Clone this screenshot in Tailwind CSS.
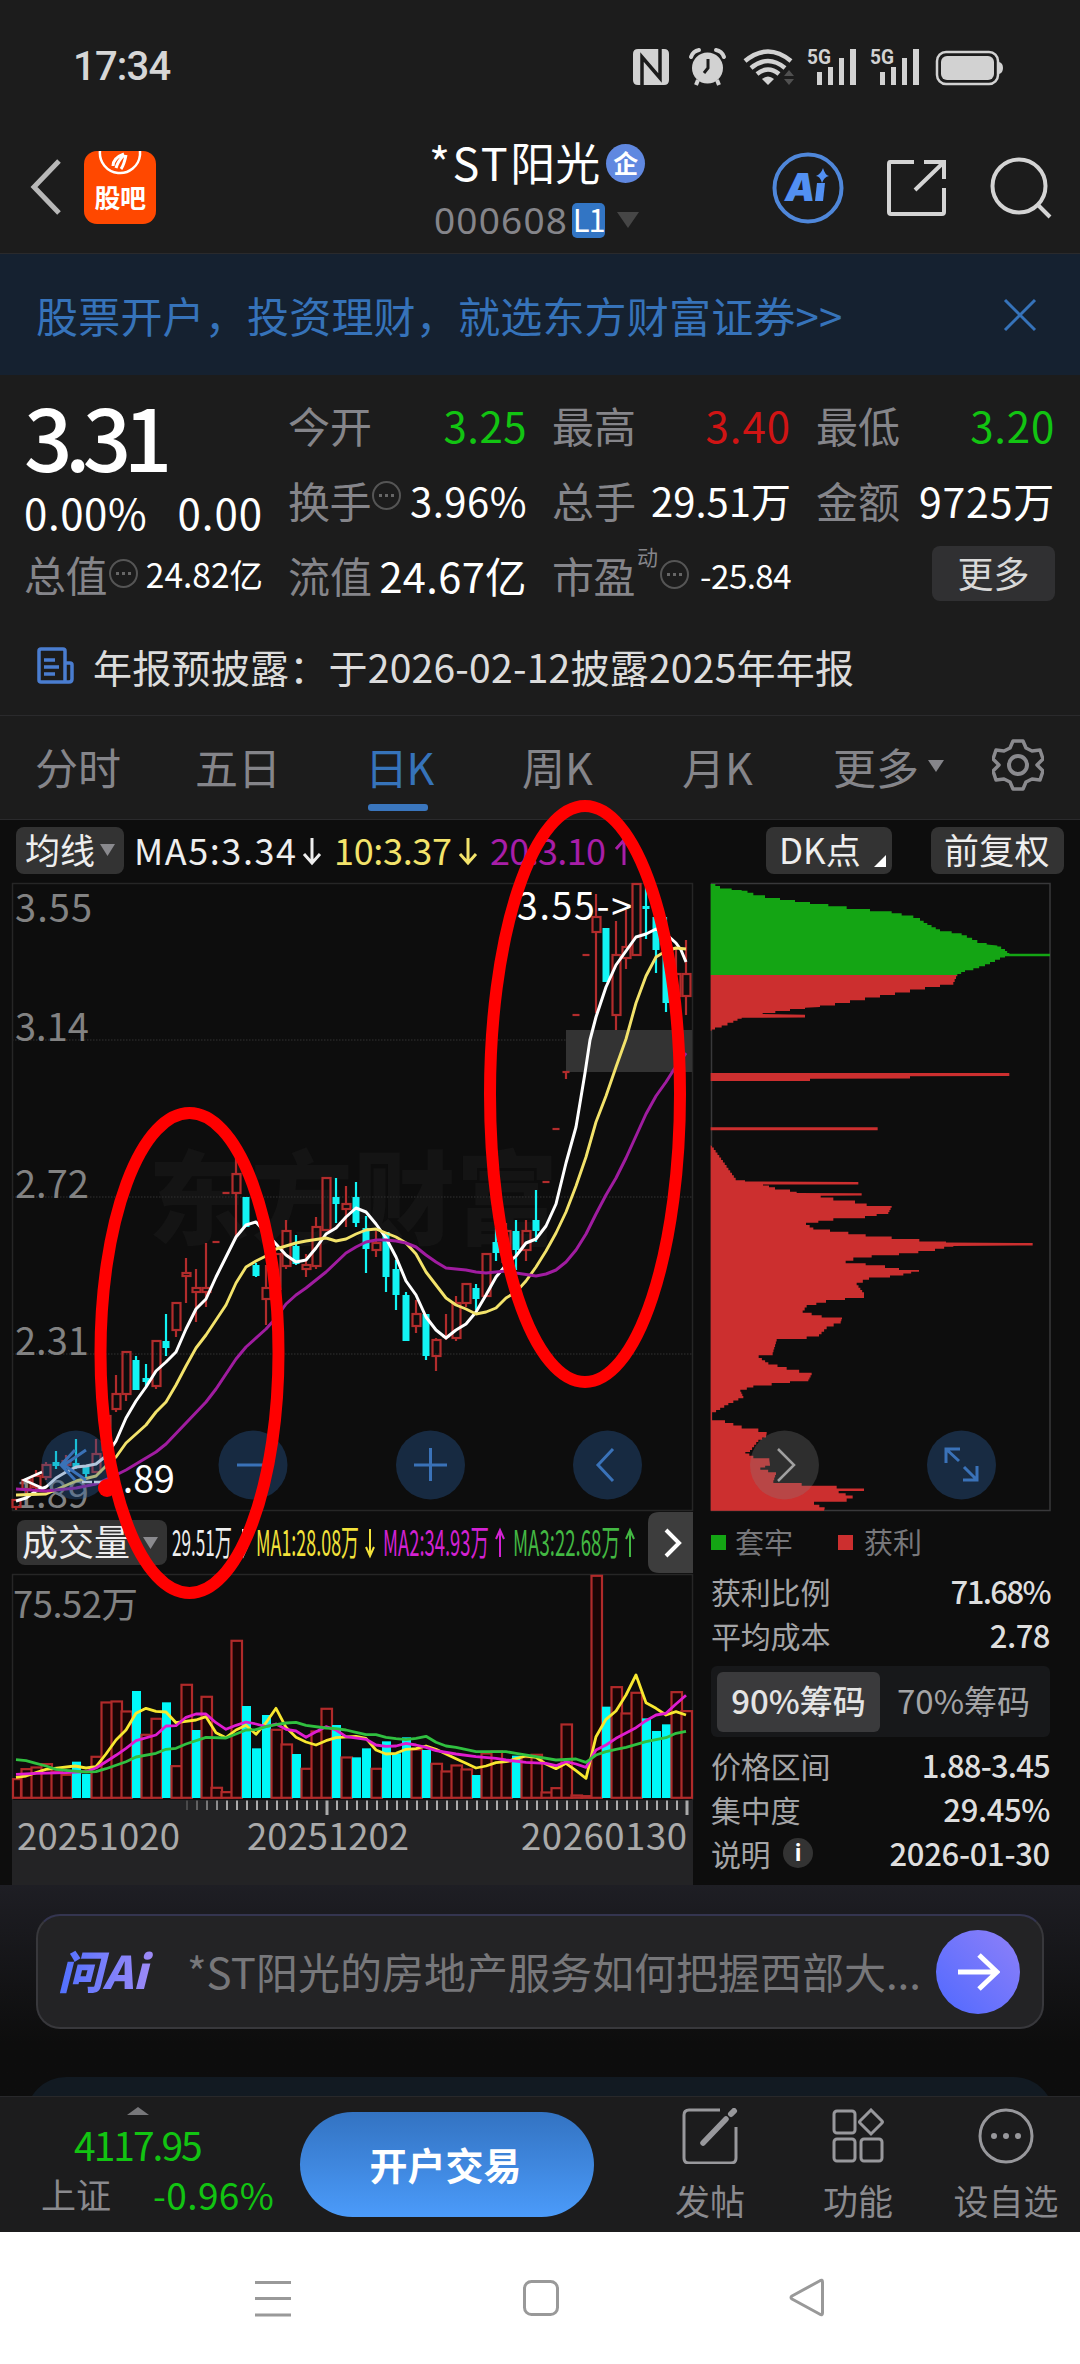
<!DOCTYPE html>
<html lang="zh-CN">
<head>
<meta charset="utf-8">
<title>*ST阳光 000608</title>
<script src="https://cdn.jsdelivr.net/npm/@tailwindcss/browser@4"></script>
</head>
<body class="relative w-[1080px] h-[2364px] overflow-hidden bg-[#0d0d0d] font-['Noto_Sans_CJK_SC',sans-serif] text-white whitespace-nowrap">

<!-- status bar -->
<header class="h-[254px] bg-[#1c1c1c] border-b border-[#2a2a2c]">
  <div class="flex h-[130px] items-start justify-between pl-[73px] pr-[70px]">
    <div class="mt-[43px] h-[48px] leading-[48px] text-[40px] font-medium tracking-[-0.8px] text-[#d6d6d6] font-['Roboto',sans-serif]">17:34</div>
    <svg class="mt-[44px]" width="380" height="44" viewBox="630 44 380 44" fill="#d2d2d2">
      <path d="M638 49h26q5 0 5 5v26q0 5-5 5h-26q-5 0-5-5V54q0-5 5-5z"/>
      <path d="M642 85V57l18 21V49" fill="none" stroke="#1c1c1c" stroke-width="3.500"/>
      <circle cx="707.500" cy="68" r="15.500"/><path d="M691 57q2-6 8-7M724 57q-2-6-8-7" stroke="#d2d2d2" stroke-width="4" fill="none" stroke-linecap="round"/><path d="M698 80l-2 5M717 80l2 5" stroke="#d2d2d2" stroke-width="4"/><path d="M708 59v9l-4 5" stroke="#1c1c1c" stroke-width="3" fill="none"/>
      <path d="M745 61q23-19 46 0M751 68q17-14 34 0M757 74q11-9 22 0" stroke="#d2d2d2" stroke-width="4.500" fill="none"/><path d="M762 79q6-5 12 0l-6 6z"/>
      <path d="M784 76l5-6 5 6zM784 79l5 6 5-6z" fill="#505050"/>
      <g id="sig"><path d="M817 72h5v13h-5zM828 67h5v18h-5zM839 58h5v27h-5zM850 49h6v36h-6z"/><text x="807" y="64" font-size="21" font-weight="700" font-family="Roboto" textLength="24" lengthAdjust="spacingAndGlyphs">5G</text></g>
      <use href="#sig" x="63"/>
      <rect x="937" y="52" width="61" height="32" rx="9" fill="none" stroke="#d2d2d2" stroke-width="2.500"/><rect x="941" y="56" width="53" height="24" rx="6"/><path d="M999 62q4 1 4 6t-4 6z"/>
    </svg>
  </div>
  <div class="flex h-[124px] items-start">
    <svg class="ml-[28px] mt-[28px]" width="36" height="58" fill="none" stroke="#b8b8b8" stroke-width="5"><path d="M31 3L6 29l25 26"/></svg>
    <div class="ml-[20px] mt-[21px] w-[72px] h-[73px] rounded-[13px] bg-[#ff4800] flex flex-col items-center overflow-hidden">
      <svg width="44" height="26" fill="none" stroke="#fff"><path d="M2 0a20 20 0 0 0 40 4V0" stroke-width="2.500"/><path d="M15 15q0-8 11-12M18 17q2-7 8-13M23 18q3-4 5-14" stroke-width="3"/></svg>
      <div class="mt-[4px] h-[32px] leading-[32px] text-[26px] font-bold tracking-[-0.5px]">股吧</div>
    </div>
    <div class="ml-[272px] w-[240px] mt-[6px]">
      <div class="flex items-center h-[52px]"><span class="ml-[1px] text-[45px] leading-[52px]"><span class="tracking-[2.5px]">*ST</span>阳光</span>
        <span class="ml-[6px] mt-[3px] flex w-[39px] h-[39px] shrink-0 items-center justify-center rounded-full bg-[#6088e0] text-[25px] leading-[34px] pb-[3px] font-bold">企</span></div>
      <div class="flex items-center h-[56px] mt-[4px] ml-[6px]"><span class="text-[37px] tracking-[1.2px] text-[#85858a] leading-[50px] font-['Noto_Sans',sans-serif]">000608</span>
        <span class="ml-[4px] flex w-[33px] h-[35px] items-center justify-center rounded-[5px] bg-[#3275c4] text-[31px] leading-[30px] pb-[3px] tracking-[-1px]">L1</span>
        <svg class="ml-[12px]" width="22" height="16" fill="#464646"><path d="M0 0h22L11 16z"/></svg></div>
    </div>
    <svg class="ml-[104px] mt-[22px]" width="72" height="72" viewBox="0 0 72 72"><circle cx="36" cy="36" r="33.500" fill="none" stroke="#4f87da" stroke-width="4"/><text x="13" y="49" font-family="Inter" font-weight="900" font-style="italic" font-size="38" fill="#5290f2" textLength="28">A</text><path d="M45 31h8l-2 18h-8z" fill="#5290f2"/><path d="M51 16q2 7 6 8-5 1-7 7-2-7-6-7 5-2 7-8z" fill="#5290f2"/></svg>
    <svg class="ml-[43px] mt-[27px]" width="60" height="62" fill="none" stroke="#d4d4d4" stroke-width="4"><path d="M27 5H3q-1 0-1 2v48q0 2 2 2h51q2 0 2-2V31M37 5h20v17M57 5L28 33"/></svg>
    <svg class="ml-[42px] mt-[26px]" width="64" height="64" fill="none" stroke="#d4d4d4" stroke-width="4"><circle cx="30" cy="30" r="26.500"/><path d="M48 48l13 13"/></svg>
  </div>
</header>

<!-- promo banner -->
<div class="flex h-[121px] items-center justify-between bg-[#152130] pl-[36px] pr-[43px] text-[#3673ba]">
  <span class="text-[42px] leading-[60px] tracking-[0.2px]">股票开户，投资理财，就选东方财富证券&gt;&gt;</span>
  <svg width="34" height="34" stroke="#3673ba" stroke-width="3"><path d="M2 2l30 30M32 2L2 32"/></svg>
</div>

<!-- quote -->
<section class="h-[341px] bg-[#1c1c1c] border-b border-[#2a2a2c] pt-[14px]">
  <div class="flex gap-[25px] pl-[24px] text-[42px] leading-[50px]">
    <div class="w-[239px]">
      <div class="h-[95px] leading-[92px] text-[85px] font-medium tracking-[-7.5px]">3.31</div>
      <div class="flex h-[56px] items-center justify-between pb-[1px] text-[42px]"><span class="tracking-[0.6px]">0.00%</span><span class="tracking-[1px]">0.00</span></div>
      <div class="flex h-[67px] items-center text-[#85858a]"><span class="tracking-[-0.5px]">总值</span><svg class="ml-[1px]" width="31" height="31" viewBox="0 0 31 31"><circle cx="15.500" cy="15.500" r="13.500" fill="none" stroke="#555" stroke-width="2"/><path d="M8 14h3v3H8zM14 14h3v3h-3zM20 14h3v3h-3z" fill="#666"/></svg><span class="ml-auto text-[33.500px] text-white">24.82亿</span></div>
    </div>
    <div class="grid grid-cols-[239px_239px_239px] auto-rows-[75px] gap-x-[25px] items-center -mt-[2px] [&>div]:flex [&>div]:items-center [&>div]:justify-between">
      <div><span class="text-[#85858a]">今开</span><span class="text-[#12c412] tracking-[0.5px]">3.25</span></div>
      <div><span class="text-[#85858a]">最高</span><span class="text-[#d01414] tracking-[1px]">3.40</span></div>
      <div><span class="text-[#85858a]">最低</span><span class="text-[#12c412] tracking-[0.8px]">3.20</span></div>
      <div><span class="text-[#85858a] tracking-[-0.5px]">换手</span><svg class="mb-[8px]" width="31" height="31" viewBox="0 0 31 31"><circle cx="15.500" cy="15.500" r="13.500" fill="none" stroke="#555" stroke-width="2"/><path d="M8 14h3v3H8zM14 14h3v3h-3zM20 14h3v3h-3z" fill="#666"/></svg><span class="ml-auto text-[40px] tracking-[0.5px]">3.96%</span></div>
      <div><span class="text-[#85858a]">总手</span><span class="text-[40px]">29.51万</span></div>
      <div><span class="text-[#85858a]">金额</span><span class="text-[41px] tracking-[0.8px]">9725万</span></div>
      <div><span class="text-[#85858a]">流值</span><span class="text-[41.500px] tracking-[0.4px]">24.67亿</span></div>
      <div><span class="text-[#85858a] tracking-[-0.5px]">市盈</span><span class="ml-[2px] mb-[38px] text-[21px] leading-[24px] text-[#85858a]">动</span><svg class="ml-[1px]" width="31" height="31" viewBox="0 0 31 31"><circle cx="15.500" cy="15.500" r="13.500" fill="none" stroke="#555" stroke-width="2"/><path d="M8 14h3v3H8zM14 14h3v3h-3zM20 14h3v3h-3z" fill="#666"/></svg><span class="ml-auto text-[33px] tracking-[-0.5px]">-25.84</span></div>
      <div><span class="ml-auto mb-[3px] flex w-[123px] h-[55px] items-center justify-center rounded-[8px] bg-[#303032] text-[36px] leading-[46px] pb-[2px] text-[#d8d8d8]">更多</span></div>
    </div>
  </div>
  <div class="mt-[22px] flex h-[66px] items-center pl-[37px]">
    <svg class="mb-[3px]" width="38" height="38" fill="none" stroke="#4a7dd0" stroke-width="3.500"><path d="M28 35V4q0-2-2-2H4Q2 2 2 4v29q0 2 2 2h28q3 0 3-3V18q0-2-2-2h-5M7 13h11M7 20h15M7 27h11"/></svg>
    <span class="ml-[18px] mb-[3px] text-[39px] leading-[50px] tracking-[0.25px] text-[#dcdcdc]">年报预披露：于2026-02-12披露2025年年报</span>
  </div>
</section>

<!-- period tabs -->
<nav class="flex h-[104px] items-start bg-[#1c1c1c] border-b border-[#2a2a2c] pt-[20px] text-[43px] leading-[60px] text-[#85858a]">
  <span class="ml-[35px] w-[160px]">分时</span><span class="w-[170px]">五日</span>
  <span class="w-[157px] text-[#3673ba]"><span class="block tracking-[-1.5px]">日K</span><span class="mt-[8px] ml-[3px] block h-[7px] w-[60px] rounded-[3px] bg-[#3a76be]"></span></span>
  <span class="w-[160px]">周K</span><span class="w-[151px]">月K</span><span>更多</span>
  <svg class="ml-[9px] mt-[24px]" width="16" height="12" fill="#85858a"><path d="M0 0h16L8 12z"/></svg>
  <svg class="ml-[48px] mt-[2px]" width="52" height="54" viewBox="-26 -27 52 54" fill="none" stroke="#8a8a8e" stroke-width="4"><path d="M-5-24H5L8-17 14-14 22-15 25-6 19 0 25 6 22 15 14 14 8 17 5 24H-5L-8 17-14 14-22 15-25 6-19 0-25-6-22-15-14-14-8-17z" stroke-linejoin="round" stroke-width="3.500"/><circle r="9"/></svg>
</nav>

<!-- indicator row -->
<div class="flex h-[62px] pt-[7px] pl-[16px] text-[35px] leading-[43px]">
  <div class="flex w-[108px] h-[47px] rounded-[8px] bg-[#333] pl-[9px] text-[#eee]"><span>均线</span><svg class="ml-[5px] mt-[17px]" width="15" height="12" fill="#8a8a8e"><path d="M0 0h15L7.500 12z"/></svg></div>
  <svg class="overflow-visible" width="510" height="50" viewBox="124 827 510 50" font-size="36"><text x="134" y="865" fill="#eee" textLength="162">MA5:3.34</text><path d="M312 838v25m-8-9l8 9 8-9" fill="none" stroke="#eee" stroke-width="3"/><text x="334" y="865" fill="#f3e36b" textLength="118">10:3.37</text><path d="M468 838v25m-8-9l8 9 8-9" fill="none" stroke="#f3e36b" stroke-width="3"/><text x="490" y="865" fill="#a81ea8" textLength="116">20:3.10</text><path d="M624 865v-25m-8 9l8-9 8 9" fill="none" stroke="#a81ea8" stroke-width="3"/></svg>
  <div class="ml-[132px] relative w-[126px] h-[47px] rounded-[8px] bg-[#333] pl-[13px] text-[#eee]">DK点<svg class="absolute right-[6px] bottom-[7px]" width="12" height="12" fill="#fff"><path d="M12 0v12H0z"/></svg></div>
  <div class="ml-[39px] w-[133px] h-[47px] rounded-[8px] bg-[#333] pl-[13px] text-[#eee] tracking-[0.3px]">前复权</div>
</div>

<!-- charts -->
<main class="flex h-[1003px]">
  <svg id="k" class="shrink-0" width="700" height="1003" viewBox="0 882 700 1003"></svg>
  <section class="w-[380px]">
    <svg id="chips" class="block" width="380" height="633" viewBox="700 882 380 633"></svg>
    <div class="ml-[11px] w-[339px] text-[30px] text-[#a4a4a6]">
      <div class="flex h-[54px] items-center pb-[2px] text-[29px] leading-[40px] text-[#77777a]"><i class="mt-[2px] block w-[15px] h-[15px] bg-[#14a514]"></i><span class="ml-[9px] mb-[1px]">套牢</span><i class="ml-[45px] mt-[2px] block w-[15px] h-[15px] bg-[#cc2f2f]"></i><span class="ml-[11px] mb-[1px]">获利</span></div>
      <div class="flex h-[44px] items-center justify-between leading-[40px]"><span class="tracking-[-0.200px]">获利比例</span><b class="text-[31px] font-medium tracking-[-1.600px] text-[#dedede]">71.68%</b></div>
      <div class="flex h-[44px] items-center justify-between leading-[40px]"><span class="tracking-[-0.200px]">平均成本</span><b class="text-[31px] font-medium tracking-[-0.500px] text-[#dedede]">2.78</b></div>
      <div class="mt-[9px] flex h-[71px] items-center rounded-[6px] bg-[#17181a] pl-[6px] text-[33px] leading-[40px]"><span class="flex w-[163px] h-[60px] items-center justify-center rounded-[6px] bg-[#3a3a3c] pb-[3px] font-medium text-[#e4e4e4]">90%筹码</span><span class="ml-[17px] pb-[3px]">70%筹码</span></div>
      <div class="mt-[6px] flex h-[44px] items-center justify-between leading-[40px]"><span class="tracking-[-0.200px]">价格区间</span><b class="text-[31px] font-medium tracking-[-0.800px] text-[#dedede]">1.88-3.45</b></div>
      <div class="flex h-[44px] items-center justify-between leading-[40px]"><span class="tracking-[-0.200px]">集中度</span><b class="text-[31px] font-medium tracking-[-0.400px] text-[#dedede]">29.45%</b></div>
      <div class="flex h-[44px] items-center leading-[40px]"><span class="tracking-[-0.500px]">说明</span><span class="ml-[13px] flex w-[30px] h-[30px] items-center justify-center rounded-full bg-[#333] font-['Inter'] text-[23px] leading-[30px] font-bold text-white">i</span><b class="ml-auto text-[31px] font-medium tracking-[-0.300px] text-[#dedede]">2026-01-30</b></div>
    </div>
  </section>
</main>

<!-- assistant prompt -->
<section class="h-[211px] overflow-hidden bg-linear-to-b from-[#1e1e24] to-[#0d0d0d] to-75% pt-[29px]">
  <div class="mx-[36px] flex h-[115px] items-center rounded-[24px] border-2 border-[#38383c] border-t-[#343550] bg-[#232325]">
    <span class="ml-[20px] w-[104px] pb-[4px] text-[45px] leading-[56px] font-black italic bg-linear-to-r from-[#4f70ff] to-[#a58cf5] bg-clip-text text-transparent">问Ai</span>
    <span class="ml-[25px] mb-[1px] w-[733px] text-[42px] leading-[56px] text-[#77777a]">*ST阳光的房地产服务如何把握西部大...</span>
    <span class="ml-[16px] flex w-[84px] h-[84px] shrink-0 items-center justify-center rounded-full bg-linear-to-tr from-[#4f68ff] to-[#8e80f8]"><svg width="44" height="40" fill="none" stroke="#fff" stroke-width="5"><path d="M2 20h38M23 3l18 17-18 17"/></svg></span>
  </div>
  <div class="mx-[26px] mt-[48px] h-[80px] rounded-t-[40px] bg-[#121a22]"></div>
</section>

<!-- action bar -->
<footer class="flex h-[136px] items-start bg-[#1c1c1d] border-t border-[#28282a] text-[35px] leading-[44px] text-[#8a8a8e]">
  <div class="w-[300px]">
    <svg class="ml-[127px] mt-[10px] block" width="22" height="8" fill="#77777a"><path d="M0 8L11 0l11 8z"/></svg>
    <div class="mt-[7px] ml-[74px] h-[44px] text-[39px] tracking-[-2px] text-[#12c412]">4117.95</div>
    <div class="mt-[6px] ml-[41px] flex"><span>上证</span><span class="ml-[42px] text-[37px] tracking-[0.400px] text-[#12c412]">-0.96%</span></div>
  </div>
  <div class="mt-[15px] flex w-[294px] h-[105px] items-center justify-center rounded-full bg-linear-to-b from-[#3373c2] to-[#4b9bfa] pb-[1px] pr-[3px] text-[38px] font-bold text-white">开户交易</div>
  <div class="ml-[74px] mt-[11px] flex w-[84px] flex-col items-center gap-[14px]"><svg width="58" height="56" fill="none" stroke="#98989c" stroke-width="3"><path d="M39 2H8Q3 2 3 7v43q0 5 5 5h42q5 0 5-5V19"/><path d="M45 11L22 35" stroke-width="5.500" stroke-linecap="round"/><path d="M50 6l3-3" stroke-width="6" stroke-linecap="round"/></svg><span>发帖</span></div>
  <div class="ml-[64px] mt-[11px] flex w-[84px] flex-col items-center gap-[14px]"><svg width="54" height="56" fill="none" stroke="#98989c" stroke-width="3"><rect x="3" y="3" width="21" height="22" rx="3"/><rect x="3" y="31" width="21" height="22" rx="3"/><rect x="30" y="31" width="21" height="22" rx="3"/><path d="M40 2l11 11q1 1 0 2L40 26 29 15q-1-1 0-2z"/></svg><span>功能</span></div>
  <div class="ml-[50px] mt-[11px] flex w-[112px] flex-col items-center gap-[14px]"><svg width="58" height="56" fill="none" stroke="#98989c" stroke-width="3"><circle cx="29" cy="28" r="26"/><path d="M17 28h0M29 28h0M41 28h0" stroke-width="6" stroke-linecap="round"/></svg><span>设自选</span></div>
</footer>

<!-- system navigation -->
<div class="flex h-[132px] bg-white pt-[46px]">
  <svg class="ml-[253px]" width="40" height="40" stroke="#999" stroke-width="3"><path d="M2 4.500h36M2 20.500h36M2 37h36"/></svg>
  <svg class="ml-[228px]" width="40" height="40" fill="none" stroke="#999" stroke-width="3"><rect x="3.500" y="3.500" width="33" height="33" rx="7"/></svg>
  <svg class="ml-[227px]" width="40" height="40" fill="none" stroke="#999" stroke-width="3" stroke-linejoin="round"><path d="M34.500 4v31q0 3-3 1L4 21q-2-1.500 0-3L31.500 3q3-2 3 1z"/></svg>
</div>

<!-- hand-drawn markers -->
<svg class="absolute left-0 top-[780px] pointer-events-none" width="700" height="840" viewBox="0 780 700 840" fill="none" stroke="#f00" stroke-width="12">
  <ellipse cx="189.500" cy="1353" rx="89" ry="240"/><ellipse cx="585" cy="1094" rx="95" ry="288"/><circle cx="107" cy="1488" r="9" fill="#f00" stroke="none"/>
</svg>

<script>
const R='#b22c2c', C='#12f4f4';
// [rising, body top, body bottom, wick top, wick bottom]
const candles=[[1,1500,1507,1500,1510],[1,1480,1489,1478,1493],[1,1476,1487,1470,1490],[1,1465,1477,1462,1480],[0,1462,1466,1451,1469],[1,1461,1465,1455,1467],[0,1463,1467,1439,1469],[0,1467,1474,1466,1478],[1,1454,1472,1439,1472],[1,1416,1450,1416,1450],[1,1394,1409,1375,1412],[1,1352,1394,1352,1401],[0,1360,1390,1356,1390],[0,1378,1382,1364,1387],[1,1341,1386,1341,1389],[0,1341,1348,1314,1356],[1,1303,1330,1303,1337],[1,1273,1276,1258,1303],[1,1288,1292,1269,1322],[1,1288,1292,1243,1307],[1,1242,1242,1242,1242],[1,1193,1193,1193,1193],[1,1174,1193,1158,1237],[0,1197,1227,1197,1227],[0,1265,1276,1263,1277],[1,1288,1299,1265,1325],[1,1254,1289,1254,1289],[1,1231,1266,1220,1269],[0,1246,1264,1235,1265],[1,1265,1269,1254,1277],[1,1227,1266,1217,1269],[1,1178,1230,1178,1230],[0,1197,1204,1178,1223],[1,1204,1209,1186,1227],[0,1197,1223,1182,1227],[0,1228,1249,1216,1273],[1,1243,1250,1231,1257],[0,1232,1277,1232,1292],[0,1269,1295,1260,1310],[0,1295,1341,1292,1341],[1,1314,1326,1300,1333],[0,1314,1356,1314,1360],[1,1340,1356,1338,1371],[1,1337,1337,1314,1340],[1,1303,1338,1296,1341],[1,1284,1303,1284,1307],[0,1288,1299,1284,1310],[1,1254,1296,1254,1296],[0,1242,1253,1227,1261],[1,1231,1262,1223,1262],[0,1231,1250,1220,1270],[1,1231,1250,1220,1261],[0,1220,1231,1190,1242],[1,1182,1182,1182,1182],[1,1129,1129,1129,1129],[1,1072,1072,1072,1079],[1,1015,1015,1015,1015],[1,955,955,955,955],[1,917,932,894,1013],[0,928,982,928,982],[1,955,1015,921,1030],[1,947,958,910,969],[1,884,955,884,955],[0,906,909,887,939],[0,917,950,917,973],[0,940,1003,917,1012],[1,974,996,947,998],[1,974,996,940,1015]];
// negative = falling day
const vol=[835,805,800,790,812,822,-785,-822,768,605,602,632,-573,702,654,-607,796,552,-690,588,861,874,420,-618,-745,-645,687,731,-762,804,692,624,-675,770,-772,-745,804,-724,-760,-712,746,-750,789,812,794,806,-825,758,752,783,-767,769,762,875,862,671,884,886,225,-620,559,638,576,-655,-693,-673,574,631];
let s='';
const line=(p,c,w)=>`<polyline points="${p}" fill="none" stroke="${c}" stroke-width="${w}" stroke-linejoin="round"/>`;
s+=`<text x="148" y="1237" font-size="102" font-weight="900" fill="#141414" textLength="410">东方财富</text>`;
s+=`<path d="M12 883.500H692.500V1510.500H12.500V883M12 1574.500H692.500V1800M12.500 1574V1800" fill="none" stroke="#262626" stroke-width="1.500"/>`;
s+=`<path d="M12 1040H692M12 1197H692M12 1354H692" stroke="#262626" stroke-width="1.500" stroke-dasharray="1.500 1.500"/>`;
s+=`<rect x="566" y="1030" width="126" height="42" fill="#333"/>`;
s+=`<g font-size="38" fill="#828282"><text x="15" y="922" textLength="77">3.55</text><text x="15" y="1041">3.14</text><text x="15" y="1198">2.72</text><text x="15" y="1355">2.31</text><text x="15" y="1508">1.89</text><text x="13" y="1618" font-size="36.500" textLength="125">75.52万</text></g>`;
candles.forEach((c,i)=>{const x=16+10*i,[d,t,b,wt,wb]=c;
  if(d){ if(wt<t)s+=`<path d="M${x} ${wt}V${t}" stroke="${R}" stroke-width="2.2"/>`; if(wb>b)s+=`<path d="M${x} ${b}V${wb}" stroke="${R}" stroke-width="2.2"/>`;
    s+= b-t<2?`<path d="M${x-3.5} ${t}h7" stroke="${R}" stroke-width="2.2"/>`:`<rect x="${x-3.5}" y="${t}" width="8" height="${b-t}" fill="none" stroke="${R}" stroke-width="2.2"/>`;}
  else s+=`<path d="M${x} ${wt}V${wb}" stroke="${C}" stroke-width="2.2"/><rect x="${x-3.5}" y="${t}" width="7" height="${b-t}" fill="${C}"/>`;});
s+=line('16,1501 26,1498 36,1491 46,1487 56,1478 66,1472 76,1467 86,1466 96,1464 106,1456 116,1441 126,1418 136,1401 146,1387 156,1371 166,1362 176,1352 186,1329 196,1309 206,1299 216,1277 226,1257 236,1237 246,1225 256,1222 266,1233 276,1244 286,1255 296,1262 306,1260 316,1248 326,1234 336,1228 346,1217 356,1208 366,1212 376,1224 386,1238 396,1257 406,1281 416,1295 426,1317 436,1330 446,1338 456,1330 466,1324 476,1312 486,1295 496,1277 506,1265 516,1256 526,1243 536,1239 546,1226 556,1204 566,1163 576,1127 585,1073 590,1040 596,1017 606,987 616,965 626,951 636,937 646,934 656,929 666,934 676,943 681,950 686,962','#fff',3);
s+=line('16,1495 46,1494 60,1488 76,1481 96,1476 106,1466 116,1457 126,1443 146,1425 156,1412 166,1402 176,1385 186,1366 196,1348 206,1335 216,1320 226,1305 236,1283 246,1267 256,1261 266,1256 276,1249 296,1243 306,1241 326,1238 336,1241 346,1239 356,1234 366,1230 376,1229 386,1233 396,1237 406,1243 416,1254 426,1272 436,1285 446,1298 456,1305 466,1309 476,1314 486,1312 496,1308 506,1298 516,1292 526,1281 536,1267 546,1251 556,1233 566,1212 576,1186 586,1157 596,1122 606,1096 616,1067 626,1039 636,1003 646,976 656,957 666,951 676,948 686,949','#f3e36b',2.9);
s+=line('16,1489 46,1491 76,1488 96,1484 116,1475 126,1470 146,1458 156,1452 166,1444 186,1423 206,1402 216,1389 226,1374 236,1359 246,1347 266,1329 276,1318 286,1304 296,1295 306,1288 326,1272 346,1253 356,1247 366,1242 376,1240 386,1240 396,1241 406,1243 416,1247 426,1255 436,1262 446,1268 466,1270 476,1272 486,1273 506,1271 516,1273 536,1276 546,1274 556,1270 566,1262 576,1250 586,1234 596,1214 606,1195 616,1178 626,1158 636,1136 646,1114 656,1096 666,1082 673,1071 686,1053','#a01ca0',3);
s+=`<g font-size="37.500" fill="#fff"><text x="517" y="920" textLength="115">3.55-></text><text x="102" y="1493">1.89</text></g><path d="M42 1472L24 1480l18 8M82 1482h10M94 1482h10" fill="none" stroke="#fff" stroke-width="2.500"/>`;
[76,253,430.5,607.5].forEach(x=>s+=`<circle cx="${x}" cy="1465" r="34.500" fill="#2a5f9e" fill-opacity=".36"/>`);
s+=`<path d="M86 1450l-22 15 22 15M75 1450l-14 15 14 15M237 1465h32M414 1465h33M430.500 1448v33M613 1449l-15 16 15 16" fill="none" stroke="#3a72b8" stroke-width="3"/>`;
s+=`<rect x="17" y="1520" width="150" height="45" rx="8" fill="#333"/><text x="22" y="1556" font-size="36" fill="#eee">成交量</text><path d="M143 1537h15l-7.500 12z" fill="#8a8a8e"/>`;
[[172,60,'29.51万','#eee',243,0],[256,103,'MA1:28.08万','#f3e23b',370,0],[383,106,'MA2:34.93万','#d322d3',500,1],[513,107,'MA3:22.68万','#43b843',630,1]].forEach(([x,w,t,c,a,u])=>s+=`<text x="${x}" y="1556" font-size="36" fill="${c}" textLength="${w}" lengthAdjust="spacingAndGlyphs">${t}</text><path d="${u?`M${a} 1557v-27m-4 9l4-9 4 9`:`M${a} 1529v27m-4-9l4 9 4-9`}" fill="none" stroke="${c}" stroke-width="2"/>`);
s+=`<path d="M693 1512h-34q-11 0-11 11v39q0 11 11 11h34z" fill="#3d3d3d"/><path d="M666 1530l13 13-13 13" fill="none" stroke="#fff" stroke-width="4"/>`;
vol.forEach((v,i)=>{const x=16+10*i,y=1500+Math.abs(v)/3;s+=v<0?`<rect x="${x-4}" y="${y}" width="9" height="${1798-y}" fill="#00f8f8"/>`:`<rect x="${x-(i?4.5:3)}" y="${y+.8}" width="${i?10.5:8}" height="${1797-y}" fill="#1a0505" stroke="#b02a2a" stroke-width="2.200"/>`;});
const vl=(p,c)=>line(p.trim().split(' ').map(q=>{const[a,b]=q.split(',');return a+','+(1500+b/3).toFixed(1)}).join(' '),c,2.8);
s+=vl('16,832 26,828 36,818 46,808 75,798 86,804 96,800 106,762 116,720 126,690 136,640 146,625 156,634 166,636 176,668 196,660 206,650 216,698 226,713 236,690 246,676 256,703 266,668 276,625 286,682 296,712 306,726 316,735 326,722 336,713 356,709 366,715 376,750 386,762 396,760 406,748 416,746 426,738 436,748 446,762 456,776 466,790 476,804 486,798 496,788 506,785 516,776 526,768 536,772 546,792 556,806 566,790 576,812 586,835 596,710 606,658 616,633 626,585 636,525 646,608 656,625 666,645 676,635 686,645','#f8e830');
s+=vl('16,823 36,820 66,818 86,815 96,804 106,785 116,766 126,745 136,722 156,705 166,678 176,677 186,652 196,642 206,642 216,668 226,688 236,676 246,666 256,672 266,680 276,672 286,688 296,693 306,712 316,695 326,680 336,690 346,710 366,718 376,735 386,739 396,738 406,730 416,735 426,742 436,752 456,762 476,770 496,775 506,780 526,787 546,790 556,797 566,785 576,792 586,802 596,750 606,735 616,715 636,683 646,662 656,645 666,640 676,612 686,586','#e01cd0');
s+=vl('16,779 26,782 36,790 46,798 56,808 66,811 86,816 96,815 106,806 126,785 136,771 156,760 166,748 176,745 186,732 206,712 226,714 236,702 246,690 256,689 266,680 276,674 286,669 296,667 306,676 326,684 336,686 346,690 356,697 366,704 376,704 386,712 396,716 406,719 416,715 426,709 436,727 446,738 456,742 476,755 506,755 516,760 536,770 556,780 576,777 586,787 596,765 606,755 616,748 626,742 646,725 666,713 676,700 686,694','#30c040');
s+=`<rect x="12" y="1800" width="681" height="85" fill="#232325"/>`;
for(let x=187;x<=687;x+=10){const m=x==327||x==687;s+=`<path d="M${x} 1800.500V${m?1815:1810}" stroke="#aaa" stroke-width="${m?3:2}" opacity="${Math.min(1,(x-170)/60)}"/>`;}
s+=`<g font-size="36.500" fill="#aaa"><text x="17" y="1850" textLength="163">20251020</text><text x="247" y="1850" textLength="162">20251202</text><text x="521" y="1850" textLength="166">20260130</text></g>`;
document.getElementById('k').innerHTML=s;

// chip distribution outlines in plot units
const green='62,55 90,64 125,71 155,71 190,80 225,88 270,92 315,98 360,102 415,107 470,113 540,120 605,123 635,130 670,134 690,142 712,152 750,167 785,172 815,176 862,193 890,201 922,203 945,214 958,223 1080,223 1080,229 945,229 915,240 885,250 850,260 825,264 802,273 62,273';
const red=['62,273 802,273 790,293 750,300 705,304 660,312 615,318 570,323 525,330 480,336 435,343 390,349 345,351 300,357 256,361 218,366 345,368 345,374 155,375 130,384 95,396 75,400 65,406 62,406','62,506 958,506 958,513 660,514 660,519 360,520 360,525 62,525','62,635 563,635 563,642 62,642',
'62,678 66,680 137,758 165,764 505,765 505,771 219,771 255,780 300,786 320,791 515,792 515,797 392,798 430,806 495,812 530,820 605,824 595,839 525,848 430,854 385,860 348,864 370,876 420,880 475,887 527,892 605,897 688,904 768,909 1028,910 1028,916 790,917 735,926 685,932 627,937 545,941 490,948 467,956 527,960 585,966 627,973 687,976 640,985 600,990 537,994 500,1008 522,1030 522,1039 465,1042 408,1049 350,1060 338,1074 365,1078 395,1085 456,1089 452,1098 410,1112 387,1130 350,1135 260,1141 248,1173 206,1181 235,1196 290,1208 365,1222 355,1237 300,1240 245,1246 190,1251 151,1261 160,1276 115,1293 66,1315 66,1327 105,1335 155,1347 205,1355 230,1363 228,1370 205,1380 180,1405 166,1408 178,1413 190,1418 238,1425 240,1437 211,1446 258,1458 250,1477 335,1484 440,1490 522,1497 446,1502 488,1513 470,1521 372,1529 404,1541 402,1546 62,1546'];
// outlines advance in horizontal steps, one row at a time
const steps=p=>{const a=p.split(' ');return a.map((q,i)=>{if(!i)return q;const[x0,y0]=a[i-1].split(',').map(Number),[x1,y1]=q.split(',').map(Number);const n=Math.round(Math.abs(y1-y0)/6);if(Math.abs(x1-x0)<3||n<1)return q;let o='';for(let k=1;k<=n;k++){const xp=x0+(x1-x0)*(k-1)/n,x=x0+(x1-x0)*k/n,y=y0+(y1-y0)*(k-.5)/n;o+=`${xp},${y} ${x},${y} `;}return o+q;}).join(' ');};
let h=`<rect x="711.500" y="883.500" width="338.500" height="627" fill="none" stroke="#38383a" stroke-width="1.500"/><g transform="translate(690 860) scale(.33333 .42085)"><polygon points="${steps(green)}" fill="#14a514"/>${red.map(p=>`<polygon points="${steps(p)}" fill="#cc2f2f"/>`).join('')}</g>`;
h+=`<circle cx="784.500" cy="1465" r="34.500" fill="#848484" fill-opacity=".28"/><path d="M778 1449l16 16-16 16" fill="none" stroke="#a0a0a0" stroke-width="2.500"/>`;
h+=`<circle cx="961.500" cy="1465" r="34.500" fill="#182b42"/><path d="M959 1461l-13-12M946 1463v-14h14M964 1467l13 13M977 1466v14h-14" fill="none" stroke="#3a72b8" stroke-width="3"/>`;
document.getElementById('chips').innerHTML=h;
</script>
</body>
</html>
